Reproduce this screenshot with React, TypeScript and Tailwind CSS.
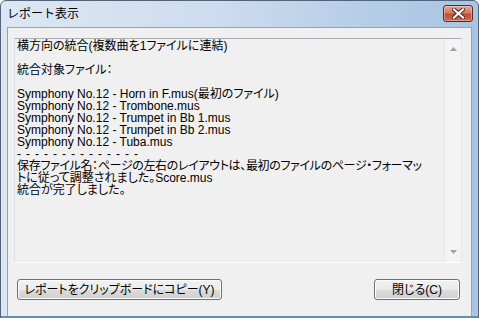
import React from "react";

const lines: string[] = [
  "横方向の統合(複数曲を1ファイルに連結)",
  "",
  "統合対象ファイル：",
  "",
  "Symphony No.12 - Horn in F.mus(最初のファイル)",
  "Symphony No.12 - Trombone.mus",
  "Symphony No.12 - Trumpet in Bb 1.mus",
  "Symphony No.12 - Trumpet in Bb 2.mus",
  "Symphony No.12 - Tuba.mus",
];

const dashes = Array.from({ length: 14 }, (_, i) => i);

function Button({ label, className }: { label: string; className: string }) {
  return (
    <div
      className={`h-[21px] rounded-[3px] border border-[#707070] bg-[linear-gradient(to_bottom,#f2f2f2_0%,#ebebeb_50%,#dddddd_51%,#cfcfcf_100%)] shadow-[inset_0_0_0_1px_#fcfcfc] flex items-center justify-center text-[12px] leading-[12px] text-black ${className}`}
    >
      {label}
    </div>
  );
}

export default function App() {
  return (
    <div
      className="w-[479px] h-[318px] overflow-hidden bg-white"
      style={{ fontFamily: '"Liberation Sans", "Noto Sans CJK JP", sans-serif' }}
    >
      <div className="w-[479px] h-[322px] flex flex-col rounded-t-[6px] border border-[#51647c] bg-[linear-gradient(to_right,#dde7f3_0%,#cddcee_45%,#b3cce7_80%,#a9c5e3_100%)]">
        {/* title bar */}
        <div className="h-[26px] flex items-start relative">
          <div className="pl-[6px] pt-[5px] text-[12px] leading-[16px] text-black">レポート表示</div>
          <div className="ml-auto mr-[5px] mt-[4px] w-[30px] h-[17px] rounded-[3px] border border-[#5a2a22] bg-[linear-gradient(to_bottom,#e8a493_0%,#d47a64_45%,#c24e33_55%,#cf6b4f_100%)] shadow-[inset_0_0_0_1px_rgba(255,255,255,0.35)] flex items-center justify-center">
            <svg width="13" height="11" viewBox="0 0 13 11">
              <path d="M2 1.5 L11 9.5 M11 1.5 L2 9.5" stroke="#4a2018" strokeWidth="4" strokeLinecap="square" />
              <path d="M2 1.5 L11 9.5 M11 1.5 L2 9.5" stroke="#ffffff" strokeWidth="2.2" strokeLinecap="square" />
            </svg>
          </div>
        </div>
        {/* client */}
        <div className="mx-[6px] flex-1 border border-[#8fa5bf] border-b-0 bg-[#f0f0f0] flex flex-col">
          <div className="ml-[6px] mr-[9px] mt-[10px] h-[225px] flex border border-t-[#abadb3] border-l-[#dbdfe6] border-r-[#e3e9ef] border-b-[#ffffff] bg-[#f0f0f0]">
            <div className="flex-1 pl-[2px] pt-[1px] text-[12px] leading-[12px] text-black [font-feature-settings:'palt'] whitespace-pre">
              {lines.map((l, i) => (
                <div key={i} className="h-[12px]">{l}</div>
              ))}
              <div className="h-[12px] flex">
                {dashes.map((i) => (
                  <span key={i} className="w-[9px] shrink-0">-</span>
                ))}
              </div>
              <div className="h-[12px] tracking-[-0.35px]">保存ファイル名：ページの左右のレイアウトは、最初のファイルのページ・フォーマッ</div>
              <div className="h-[12px]">トに従って調整されました。Score.mus</div>
              <div className="h-[12px]">統合が完了しました。</div>
            </div>
            <div className="w-[17px] border-l border-[#e8e8e8] bg-[#f4f4f4] flex flex-col items-center justify-between py-[8px]">
              <svg width="7" height="4" viewBox="0 0 7 4">
                <path d="M0 4 L3.5 0 L7 4 Z" fill="#a3a3a3" />
              </svg>
              <svg width="7" height="4" viewBox="0 0 7 4">
                <path d="M0 0 L3.5 4 L7 0 Z" fill="#a3a3a3" />
              </svg>
            </div>
          </div>
          <div className="mt-[16px] flex items-start pl-[9px] pr-[11px] [font-feature-settings:'palt']">
            <Button label="レポートをクリップボードにコピー(Y)" className="w-[205px]" />
            <Button label="閉じる(C)" className="ml-auto w-[86px]" />
          </div>
        </div>
        <div className="h-[5px] bg-[#5d92bd]" />
      </div>
    </div>
  );
}
